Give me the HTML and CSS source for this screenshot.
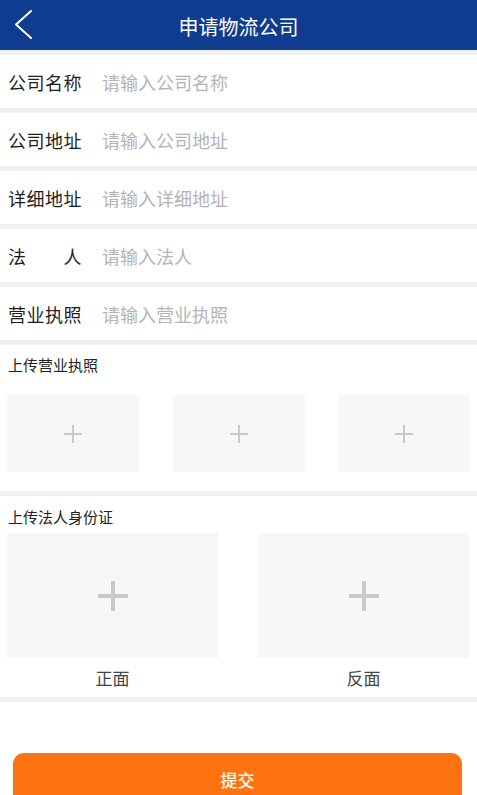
FILE: index.html
```html
<!DOCTYPE html>
<html lang="zh">
<head>
<meta charset="utf-8">
<title>申请物流公司</title>
<link rel="stylesheet" href="styles.css">
</head>
<body>
<header class="topbar">
  <svg class="back" width="20" height="32" viewBox="0 0 20 32"><path d="M18 2 L3 15.5 L18 29" fill="none" stroke="#fff" stroke-width="2" stroke-linecap="round" stroke-linejoin="round"/></svg>
  <h1 class="title">申请物流公司</h1>
</header>
<div class="sep"></div>
<div class="row"><span class="label">公司名称</span><span class="ph">请输入公司名称</span></div>
<div class="sep"></div>
<div class="row"><span class="label">公司地址</span><span class="ph">请输入公司地址</span></div>
<div class="sep"></div>
<div class="row"><span class="label">详细地址</span><span class="ph">请输入详细地址</span></div>
<div class="sep"></div>
<div class="row"><span class="label">法　　人</span><span class="ph">请输入法人</span></div>
<div class="sep"></div>
<div class="row"><span class="label">营业执照</span><span class="ph">请输入营业执照</span></div>
<div class="sep"></div>
<section class="upload">
  <div class="sec-title">上传营业执照</div>
  <div class="grid3">
    <div class="box small"><span class="plus"></span></div>
    <div class="box small"><span class="plus"></span></div>
    <div class="box small"><span class="plus"></span></div>
  </div>
</section>
<div class="sep"></div>
<section class="upload id">
  <div class="sec-title">上传法人身份证</div>
  <div class="grid2">
    <div class="card"><div class="box big"><span class="plus"></span></div><div class="cap">正面</div></div>
    <div class="card"><div class="box big"><span class="plus"></span></div><div class="cap">反面</div></div>
  </div>
</section>
<div class="sep"></div>
<div class="foot">
  <button class="submit">提交</button>
</div>
</body>
</html>
```
FILE: styles.css
```css
* { box-sizing: border-box; }
html, body { margin: 0; padding: 0; background: #fff; }
body {
  font-family: "Noto Sans CJK SC", "Noto Sans", sans-serif;
  width: 477px;
  height: 795px;
  overflow: hidden;
}
.topbar {
  height: 50px;
  background: #103c8f;
  display: flex;
  align-items: center;
  justify-content: center;
  position: relative;
}
.back { position: absolute; left: 13px; top: 9px; }
.title {
  margin: 0;
  font-size: 20px;
  font-weight: 400;
  color: #fff;
  line-height: 1;
  padding-top: 3px;
}
.sep { height: 5px; background: #f0f0f0; }
.row {
  height: 53px;
  display: flex;
  align-items: center;
  padding-left: 8px;
  font-size: 18px;
  line-height: 1;
}
.label { width: 94px; color: #1e1e1e; letter-spacing: 0.5px; }
.ph { color: #b4b4b4; }
.upload { padding: 10px 7px 19px; }
.sec-title { font-size: 15px; line-height: 20px; color: #222; padding-left: 1px; }
.grid3 {
  margin-top: 20px;
  display: grid;
  grid-template-columns: 132px 132px 132px;
  justify-content: space-between;
}
.box {
  background: #f7f7f7;
  display: flex;
  align-items: center;
  justify-content: center;
}
.box.small { height: 77px; }
.box.big { height: 125px; }
.plus { position: relative; width: 18px; height: 18px; }
.plus::before, .plus::after {
  content: "";
  position: absolute;
  background: #c9c9c9;
}
.plus::before { left: 0; right: 0; top: 8px; height: 2px; }
.plus::after { top: 0; bottom: 0; left: 8px; width: 2px; }
.big .plus { width: 30px; height: 30px; }
.big .plus::before { top: 13px; height: 4px; }
.big .plus::after { left: 13px; width: 4px; }
.upload.id { padding: 11px 8px 8px 7px; }
.grid2 {
  margin-top: 6px;
  display: grid;
  grid-template-columns: 211px 211px;
  justify-content: space-between;
}
.cap {
  margin-top: 9px;
  text-align: center;
  font-size: 17px;
  line-height: 22px;
  color: #444;
}
.foot { padding: 51px 15px 0 13px; }
.submit {
  display: block;
  width: 100%;
  height: 52px;
  border: none;
  border-radius: 11px;
  background: #ff720f;
  color: #fff;
  font-family: inherit;
  font-size: 17px;
  font-weight: 500;
  padding: 0;
}
```
